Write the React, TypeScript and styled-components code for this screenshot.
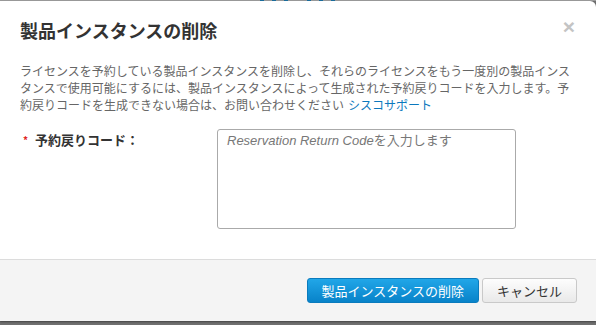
import React from 'react';
import styled, { createGlobalStyle } from 'styled-components';

const GlobalStyle = createGlobalStyle`
  html, body {
    margin: 0;
    padding: 0;
    background: #6f6f6f;
  }
  body {
    font-family: "Liberation Sans", "Noto Sans CJK JP", sans-serif;
  }
`;

const Backdrop = styled.div`
  width: 596px;
  height: 325px;
  overflow: hidden;
  background: #707070;
`;

const BackdropEdge = styled.div`
  height: 1px;
  background:
    repeating-linear-gradient(
      90deg,
      transparent 0 260px,
      #1a6e9e 260px 264px,
      transparent 264px 272px,
      #1a6e9e 272px 276px,
      transparent 276px 284px,
      #1a6e9e 284px 288px,
      transparent 288px 307px,
      #1a6e9e 307px 311px,
      transparent 311px 319px,
      #1a6e9e 319px 323px,
      transparent 323px 331px,
      #1a6e9e 331px 335px,
      transparent 335px 596px
    ),
    #9c9c9c;
`;

const Modal = styled.div`
  width: 596px;
  height: 320px;
  background: #fff;
  border-top-right-radius: 6px;
  display: flex;
  flex-direction: column;
  box-shadow: 0 1px 2px rgba(0, 0, 0, 0.4);
`;

const Header = styled.div`
  display: flex;
  justify-content: space-between;
  align-items: flex-start;
  padding: 17px 20px 0 20px;
`;

const Title = styled.h2`
  margin: 0;
  font-family: "Noto Sans CJK JP", sans-serif;
  font-size: 18px;
  line-height: 24px;
  font-weight: 700;
  color: #333;
`;

const CloseButton = styled.button`
  border: 0;
  background: none;
  padding: 0 1px 0 0;
  margin-top: -3px;
  font-family: "Liberation Sans", sans-serif;
  font-size: 21px;
  font-weight: 700;
  line-height: 24px;
  color: #c4c4c4;
  cursor: pointer;
`;

const Body = styled.div`
  flex: 1;
  padding: 20px 20px 30px 20px;
`;

const Description = styled.p`
  margin: 0;
  width: 556px;
  font-family: "Noto Sans CJK JP", sans-serif;
  font-size: 12px;
  line-height: 17px;
  color: #666;
`;

const SupportLink = styled.a`
  color: #0b78bd;
  text-decoration: none;
  margin-left: 4px;
`;

const FormRow = styled.div`
  display: flex;
  margin-top: 16px;
`;

const Label = styled.label`
  width: 197px;
  display: flex;
  align-items: center;
  align-self: flex-start;
  padding-top: 2px;
  font-family: "Noto Sans CJK JP", sans-serif;
  font-size: 13px;
  line-height: 18px;
  font-weight: 700;
  color: #333;
`;

const Required = styled.span`
  color: #e02424;
  font-size: 10px;
  width: 15px;
  padding-left: 3px;
  box-sizing: border-box;
`;

const CodeInput = styled.textarea`
  width: 299px;
  height: 100px;
  box-sizing: border-box;
  margin: 0;
  padding: 2px 9px;
  border: 1px solid #aaa;
  border-radius: 3px;
  resize: none;
  font-family: "Liberation Sans", "Noto Sans CJK JP", sans-serif;
  font-size: 13px;
  line-height: 18px;
  color: #333;
  font-synthesis: none;

  &::placeholder {
    color: #777;
    font-style: italic;
    font-synthesis: none;
    opacity: 1;
  }
`;

const Footer = styled.div`
  height: 62px;
  box-sizing: border-box;
  border-top: 1px solid #dcdcdc;
  background: #f4f4f4;
  display: flex;
  justify-content: flex-end;
  align-items: flex-start;
  gap: 3px;
  padding: 18px 19px 0 0;
`;

const Button = styled.button<{ $primary?: boolean }>`
  height: 25px;
  box-sizing: border-box;
  padding: 0 14px;
  border-radius: 3px;
  border: 1px solid ${p => (p.$primary ? '#0a7bbd' : '#c9c9c9')};
  background: ${p =>
    p.$primary
      ? 'linear-gradient(#21a6e8, #0883c9)'
      : 'linear-gradient(#fdfdfd, #e9e9e9)'};
  color: ${p => (p.$primary ? '#fff' : '#333')};
  font-family: "Noto Sans CJK JP", sans-serif;
  font-size: 13px;
  line-height: 23px;
  cursor: pointer;
`;

export default function App() {
  return (
    <>
      <GlobalStyle />
      <Backdrop>
        <BackdropEdge />
        <Modal>
          <Header>
            <Title>製品インスタンスの削除</Title>
            <CloseButton aria-label="閉じる">×</CloseButton>
          </Header>
          <Body>
            <Description>
              ライセンスを予約している製品インスタンスを削除し、それらのライセンスをもう一度別の製品インスタンスで使用可能にするには、製品インスタンスによって生成された予約戻りコードを入力します。予約戻りコードを生成できない場合は、お問い合わせください
              <SupportLink href="#">シスコサポート</SupportLink>
            </Description>
            <FormRow>
              <Label>
                <Required>*</Required>
                予約戻りコード：
              </Label>
              <CodeInput placeholder="Reservation Return Codeを入力します" />
            </FormRow>
          </Body>
          <Footer>
            <Button $primary>製品インスタンスの削除</Button>
            <Button>キャンセル</Button>
          </Footer>
        </Modal>
      </Backdrop>
    </>
  );
}
